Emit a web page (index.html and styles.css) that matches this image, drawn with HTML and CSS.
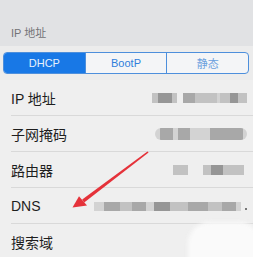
FILE: index.html
```html
<!DOCTYPE html>
<html lang="zh">
<head>
<meta charset="utf-8">
<link rel="stylesheet" href="styles.css">
</head>
<body>
<div class="page">
  <div class="header"><span class="section-label">IP 地址</span></div>
  <div class="seg-wrap">
    <div class="seg">
      <div class="seg-item active">DHCP</div>
      <div class="seg-item">BootP</div>
      <div class="seg-item light">静态</div>
    </div>
  </div>
  <div class="list">
    <div class="row">
      <span class="label">IP 地址</span>
      <span class="value v-ip">
        <i class="b b1" style="width:6px"></i><i class="b b3" style="width:14px"></i><i class="b b1" style="width:5px"></i><i class="gap" style="width:6px"></i><i class="b b2" style="width:12px"></i><i class="b b1" style="width:22px"></i><i class="b b0" style="width:3px"></i><i class="b b1" style="width:10px"></i><i class="b b3" style="width:8px"></i><i class="b b1" style="width:9px"></i>
      </span>
    </div>
    <div class="row">
      <span class="label">子网掩码</span>
      <span class="value v-mask">
        <i class="b b0" style="width:5px"></i><i class="b b2" style="width:13px"></i><i class="b b0" style="width:5px"></i><i class="b b2" style="width:12px"></i><i class="b b0" style="width:20px"></i><i class="b b2" style="width:33px"></i><i class="b b0" style="width:4px"></i>
      </span>
    </div>
    <div class="row">
      <span class="label">路由器</span>
      <span class="value v-router">
        <i class="b b1" style="width:15px"></i><i class="gap" style="width:15px"></i><i class="b b1" style="width:8px"></i><i class="b b3" style="width:12px"></i><i class="b b1" style="width:21px"></i>
      </span>
    </div>
    <div class="row">
      <span class="label">DNS</span>
      <span class="value v-dns">
        <i class="b b0" style="width:10px"></i><i class="b b2" style="width:16px"></i><i class="b b1" style="width:12px"></i><i class="b b2" style="width:14px"></i><i class="b b0" style="width:8px"></i><i class="b b3" style="width:16px"></i><i class="b b1" style="width:18px"></i><i class="b b2" style="width:20px"></i><i class="b b1" style="width:14px"></i><i class="b b2" style="width:14px"></i><i class="b b0" style="width:5px"></i><i class="dot"></i>
      </span>
    </div>
    <div class="row">
      <span class="label">搜索域</span>
    </div>
  </div>
  <div class="blob"></div>
  <svg class="arrow" width="253" height="257" viewBox="0 0 253 257">
    <polygon points="148.6,152.6 147.4,151.4 82.2,199.6 84.2,202.4" fill="#e5323a"/>
    <polygon points="72.5,207.5 79.0,196.2 87.0,205.5" fill="#e5323a"/>
  </svg>
</div>
</body>
</html>
```
FILE: styles.css
```css
html, body {
  margin: 0;
  padding: 0;
}
body {
  width: 253px;
  height: 257px;
  overflow: hidden;
  background: #efefef;
  font-family: "Liberation Sans", "Noto Sans CJK SC", sans-serif;
}
.page {
  position: relative;
  width: 253px;
  height: 257px;
  background: #efefef;
}
.header {
  height: 46px;
  background: #e1e2e4;
  box-sizing: border-box;
  padding: 0 0 6px 11px;
  display: flex;
  align-items: flex-end;
}
.section-label {
  font-size: 11px;
  color: #737377;
  line-height: 14px;
}
.seg-wrap {
  height: 34px;
  box-sizing: border-box;
  padding: 6px 4px 0 3px;
  background: #ececec;
}
.seg {
  display: flex;
  height: 22px;
  box-sizing: border-box;
  border: 1px solid #4d8fdc;
  border-radius: 4px;
  overflow: hidden;
  background: #f4f5f7;
}
.seg-item {
  flex: 1;
  display: flex;
  align-items: center;
  justify-content: center;
  font-size: 11px;
  color: #2f7edb;
  border-left: 1px solid #4d8fdc;
}
.seg-item:first-child {
  border-left: none;
}
.seg-item.active {
  background: #1878e6;
  color: #e8f1fc;
}
.seg-item.light {
  color: #6aa0de;
}
.list {
  background: #efefef;
}
.row {
  height: 34px;
  border-bottom: 1px solid #d9d9d9;
  margin-left: 11px;
  display: flex;
  align-items: center;
  justify-content: space-between;
  padding-right: 6px;
  padding-top: 1px;
  box-sizing: content-box;
}
.label {
  font-size: 14px;
  color: #1e1e1e;
}
.value {
  display: flex;
  align-items: center;
  filter: blur(0.5px);
}
.value .b {
  display: block;
  height: 10px;
}
.value .gap {
  display: block;
  height: 10px;
}
.b0 { background: #d3d3d3; }
.b1 { background: #c2c2c2; }
.b2 { background: #a8a8a8; }
.b3 { background: #969696; }
.v-mask {
  border-radius: 6px;
  overflow: hidden;
}
.v-mask .b { height: 12px; }
.v-router { margin-right: 3px; }
.v-dns .b { height: 9px; }
.dot {
  display: block;
  width: 2px;
  height: 2px;
  background: #777;
  margin-left: 4px;
  margin-top: 6px;
}
.blob {
  position: absolute;
  left: 188px;
  top: 222px;
  width: 70px;
  height: 40px;
  background: #fafafa;
  border-radius: 22px 18px 0 0;
  filter: blur(2px);
}
.arrow {
  position: absolute;
  left: 0;
  top: 0;
  pointer-events: none;
}
```
